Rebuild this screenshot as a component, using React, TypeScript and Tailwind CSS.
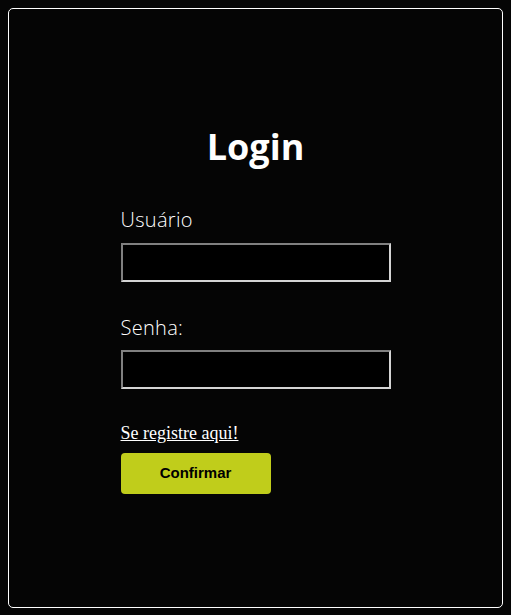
export default function App() {
  return (
    <div className="min-h-[615px] w-full bg-[#050505] p-2">
      <div className="h-[600px] w-[495px] rounded-[5px] border border-white bg-[#050505]">
        <div className="mx-auto flex w-[270px] flex-col pt-[118px]">
          <h1 className="h-10 text-center text-[36px] font-bold leading-10 text-white [font-family:'Open_Sans',sans-serif]">
            Login
          </h1>

          <label className="mt-[39px] text-[20px] font-light leading-7 tracking-[0.3px] text-white [font-family:'Open_Sans',sans-serif]">
            Usuário
          </label>
          <input
            type="text"
            className="mt-[9px] h-[39px] w-[270px] border-2 border-t-[#808080] border-l-[#808080] border-b-[#d4d4d4] border-r-[#d4d4d4] bg-black px-1 text-white outline-none"
          />

          <label className="mt-[32px] text-[20px] font-light leading-7 tracking-[0.3px] text-white [font-family:'Open_Sans',sans-serif]">
            Senha:
          </label>
          <input
            type="password"
            className="mt-2 h-[39px] w-[270px] border-2 border-t-[#808080] border-l-[#808080] border-b-[#d4d4d4] border-r-[#d4d4d4] bg-black px-1 text-white outline-none"
          />

          <a
            href="#"
            className="mt-[34px] self-start text-[18px] leading-5 text-white underline [font-family:'Liberation_Serif',serif]"
          >
            Se registre aqui!
          </a>

          <button className="mt-[10px] h-[41px] w-[150px] rounded-[4px] bg-[#c0cd1b] text-[15px] font-bold text-black [font-family:'Liberation_Sans',sans-serif]">
            Confirmar
          </button>
        </div>
      </div>
    </div>
  );
}
